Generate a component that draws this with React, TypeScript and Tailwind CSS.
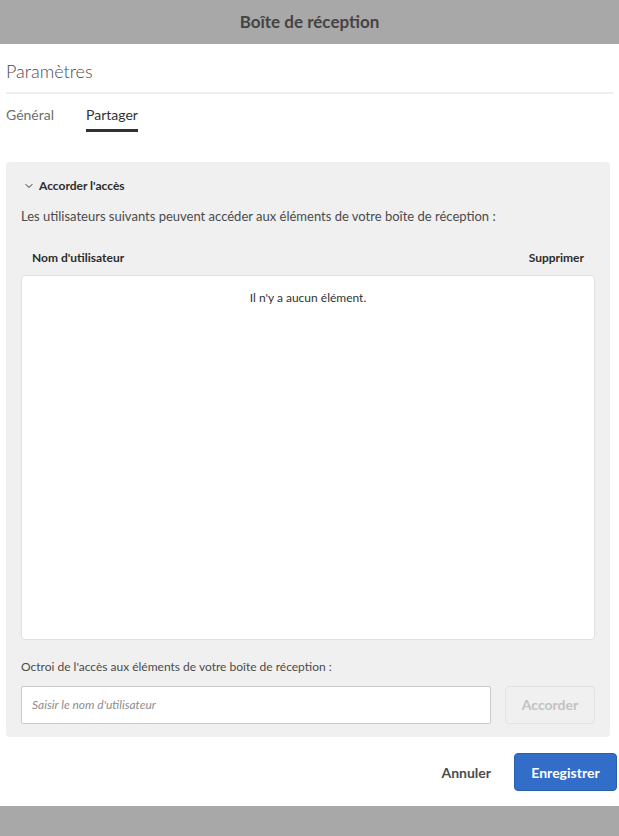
import { ChevronDown } from "lucide-react";

export default function App() {
  return (
    <div className="flex h-[836px] w-[619px] flex-col bg-white font-['Lato',sans-serif] text-[#4b4b4b]">
      {/* Title bar */}
      <div className="flex h-[44px] items-center justify-center bg-[#a8a8a8]">
        <h1 className="text-[17px] font-bold text-[#444]">Boîte de réception</h1>
      </div>

      {/* Settings header */}
      <div className="px-[6px]">
        <h2 className="mt-[14px] h-[36px] border-b-2 border-[#eeeeee] text-[18px] font-light text-[#4b4b4b]">
          Paramètres
        </h2>
        <div className="flex gap-[32px] pt-[10px] text-[14px]">
          <span className="pb-[6px] text-[#6e6e6e]">Général</span>
          <span className="border-b-[3px] border-[#323232] pb-[4px] text-[#323232]">Partager</span>
        </div>
      </div>

      {/* Share panel */}
      <div className="ml-[6px] mr-[9px] mt-[30px] flex h-[575px] flex-col rounded-[4px] bg-[#f0f0f0] px-[15px]">
        <div className="mt-[15px] flex items-center gap-[4px] pl-[2px] text-[12px] font-bold text-[#2c2c2c]">
          <ChevronDown className="h-[12px] w-[12px]" strokeWidth={2} />
          <span>Accorder l'accès</span>
        </div>
        <p className="mt-[12px] text-[13px] text-[#4b4b4b]">
          Les utilisateurs suivants peuvent accéder aux éléments de votre boîte de réception :
        </p>
        <div className="mt-[22px] flex justify-between px-[11px] text-[12px] font-bold text-[#2c2c2c]">
          <span>Nom d'utilisateur</span>
          <span>Supprimer</span>
        </div>
        <div className="mt-[8px] h-[365px] rounded-[4px] border border-[#e1e1e1] bg-white pt-[13px] text-center text-[12px] text-[#323232]">
          Il n'y a aucun élément.
        </div>
        <p className="mt-[18px] text-[12px] text-[#4b4b4b]">
          Octroi de l'accès aux éléments de votre boîte de réception :
        </p>
        <div className="mt-[10px] flex gap-[14px]">
          <input
            className="h-[38px] flex-1 rounded-[2px] border border-[#cacaca] bg-white px-[10px] text-[12px] italic outline-none placeholder:text-[#8e8e8e]"
            placeholder="Saisir le nom d'utilisateur"
          />
          <button
            disabled
            className="h-[38px] w-[90px] rounded-[4px] border border-[#e3e3e3] text-[14px] font-bold text-[#c2c2c2]"
          >
            Accorder
          </button>
        </div>
      </div>

      {/* Footer */}
      <div className="flex items-center justify-end gap-[23px] pr-[2px] pt-[16px]">
        <button className="text-[14px] font-bold text-[#4b4b4b]">Annuler</button>
        <button className="h-[38px] w-[103px] rounded-[4px] border border-[#2a5fb0] bg-[#326ec8] text-[14px] font-bold text-white">
          Enregistrer
        </button>
      </div>

      <div className="mt-auto h-[30px] bg-[#a8a8a8]" />
    </div>
  );
}
